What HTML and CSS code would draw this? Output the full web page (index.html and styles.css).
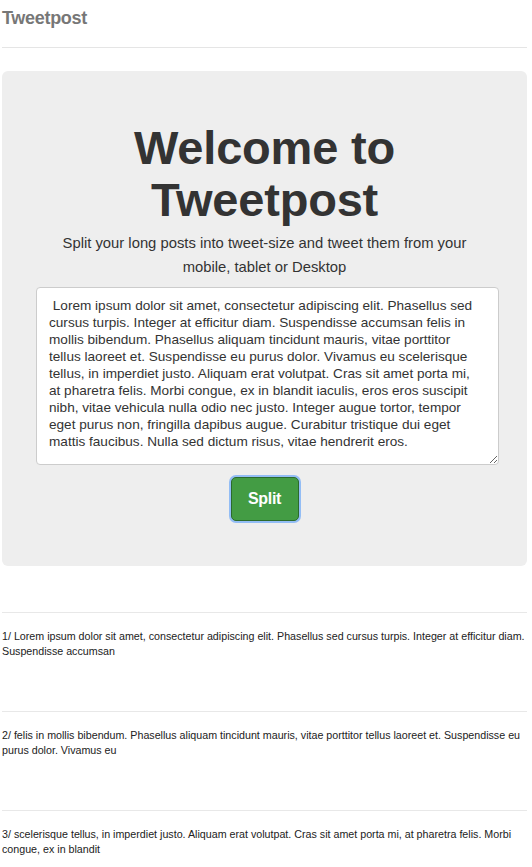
FILE: index.html
```html
<!DOCTYPE html>
<html>
<head>
<meta charset="utf-8">
<link rel="stylesheet" href="styles.css">
</head>
<body>
<div class="page">
  <header class="brand-bar"><span class="brand">Tweetpost</span></header>
  <hr class="rule">
  <section class="jumbo">
    <h1 class="title">Welcome to Tweetpost</h1>
    <p class="lead">Split your long posts into tweet-size and tweet them from your mobile, tablet or Desktop</p>
    <textarea class="input" spellcheck="false"> Lorem ipsum dolor sit amet, consectetur adipiscing elit. Phasellus sed cursus turpis. Integer at efficitur diam. Suspendisse accumsan felis in mollis bibendum. Phasellus aliquam tincidunt mauris, vitae porttitor tellus laoreet et. Suspendisse eu purus dolor. Vivamus eu scelerisque tellus, in imperdiet justo. Aliquam erat volutpat. Cras sit amet porta mi, at pharetra felis. Morbi congue, ex in blandit iaculis, eros eros suscipit nibh, vitae vehicula nulla odio nec justo. Integer augue tortor, tempor eget purus non, fringilla dapibus augue. Curabitur tristique dui eget mattis faucibus. Nulla sed dictum risus, vitae hendrerit eros.</textarea>
    <button class="split">Split</button>
  </section>
  <ul class="tweets">
    <li class="tweet">1/ Lorem ipsum dolor sit amet, consectetur adipiscing elit. Phasellus sed cursus turpis. Integer at efficitur diam. Suspendisse accumsan</li>
    <li class="tweet">2/ felis in mollis bibendum. Phasellus aliquam tincidunt mauris, vitae porttitor tellus laoreet et. Suspendisse eu purus dolor. Vivamus eu</li>
    <li class="tweet">3/ scelerisque tellus, in imperdiet justo. Aliquam erat volutpat. Cras sit amet porta mi, at pharetra felis. Morbi congue, ex in blandit</li>
  </ul>
</div>
</body>
</html>
```
FILE: styles.css
```css
html, body {
  margin: 0;
  padding: 0;
  background: #fff;
  font-family: "Liberation Sans", Arial, sans-serif;
  color: #333;
}
.page {
  width: 525px;
  margin-left: 2px;
}
.brand-bar {
  height: 36px;
  display: flex;
  align-items: center;
}
.brand {
  font-size: 18px;
  font-weight: bold;
  color: #777;
  letter-spacing: -0.3px;
}
.rule {
  margin: 11px 0 0 0;
  border: 0;
  border-top: 1px solid #e5e5e5;
  height: 0;
}
.jumbo {
  margin-top: 23px;
  background: #eee;
  border-radius: 6px;
  height: 495px;
  box-sizing: border-box;
  padding-top: 51px;
  display: flex;
  flex-direction: column;
  align-items: center;
}
.title {
  margin: 0;
  width: 360px;
  text-align: center;
  font-size: 47px;
  line-height: 52px;
  font-weight: bold;
  color: #333;
  letter-spacing: -0.2px;
}
.lead {
  margin: 5px 0 0 0;
  width: 420px;
  text-align: center;
  font-size: 14.8px;
  line-height: 24px;
  font-weight: normal;
  color: #333;
}
.input {
  margin: 8px 0 0 6px;
  width: 463px;
  height: 178px;
  box-sizing: border-box;
  border: 1px solid #ccc;
  border-radius: 4px;
  background: #fff;
  padding: 9px 18px 9px 12px;
  font-family: "Liberation Sans", Arial, sans-serif;
  font-size: 13.6px;
  line-height: 17px;
  color: #333;
  resize: vertical;
  overflow: hidden;
}
.split {
  margin-top: 12px;
  width: 68px;
  height: 44px;
  background: #439c44;
  border: 1px solid #2c6a2d;
  border-radius: 5px;
  box-shadow: 0 0 0 2px #93bdf5;
  color: #fff;
  font-family: "Liberation Sans", Arial, sans-serif;
  font-size: 16px;
  font-weight: bold;
  letter-spacing: -0.3px;
}
.tweets {
  list-style: none;
  margin: 46px 0 0 0;
  padding: 0;
}
.tweet {
  border-top: 1px solid #e8e8e8;
  padding-top: 16px;
  height: 82px;
  font-size: 10.7px;
  line-height: 15px;
  color: #222;
}
```
